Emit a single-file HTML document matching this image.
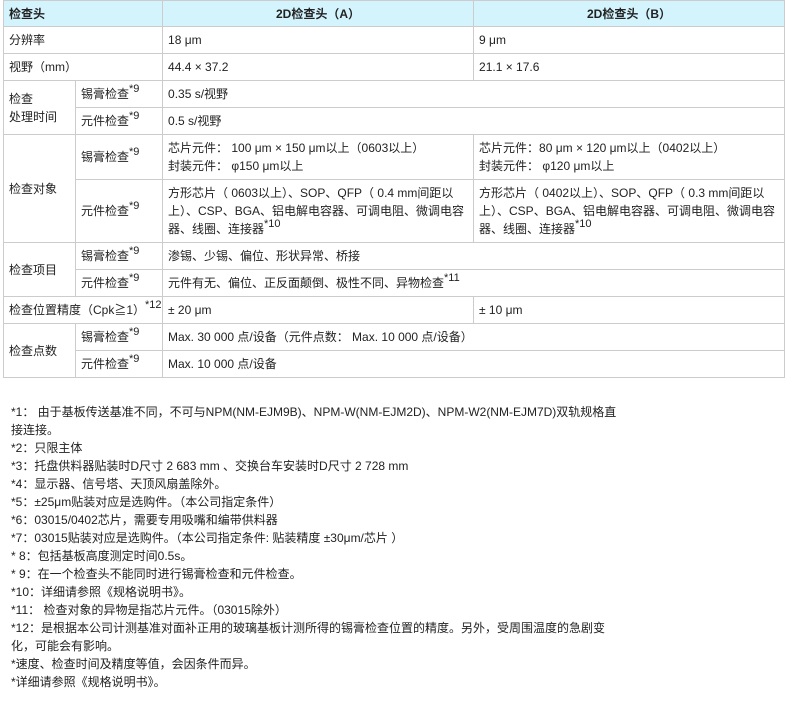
<!DOCTYPE html>
<html><head><meta charset="utf-8"><style>
body{margin:0;background:#fff;font-family:"Liberation Sans","Noto Sans CJK SC",sans-serif;font-size:12px;color:#222;width:789px;height:701px;overflow:hidden}
table{position:absolute;left:3px;top:0;border-collapse:collapse;table-layout:fixed;width:781px}
td,th{border:1px solid #ccc;padding:0 5px;vertical-align:middle;line-height:18px;font-weight:normal;text-align:left}
th{background:#d4f4fd;font-weight:bold}
th.c{text-align:center}
td.nw{white-space:nowrap;padding-right:0}
sup{font-size:11px;vertical-align:0;position:relative;top:-6px;line-height:0}
.notes{position:absolute;left:11px;top:403px;line-height:18px;width:606px}
</style></head><body>
<table>
<colgroup><col style="width:72px"><col style="width:87px"><col style="width:311px"><col style="width:311px"></colgroup>
<tr style="height:26px"><th colspan="2">检查头</th><th class="c">2D检查头（A）</th><th class="c">2D检查头（B）</th></tr>
<tr style="height:27px"><td colspan="2">分辨率</td><td>18 μm</td><td>9 μm</td></tr>
<tr style="height:27px"><td colspan="2">视野（mm）</td><td>44.4 × 37.2</td><td>21.1 × 17.6</td></tr>
<tr style="height:27px"><td rowspan="2">检查<br>处理时间</td><td>锡膏检查<sup>*9</sup></td><td colspan="2">0.35 s/视野</td></tr>
<tr style="height:27px"><td>元件检查<sup>*9</sup></td><td colspan="2">0.5 s/视野</td></tr>
<tr style="height:45px"><td rowspan="2">检查对象</td><td>锡膏检查<sup>*9</sup></td><td>芯片元件： 100 μm × 150 μm以上（0603以上）<br>封装元件： φ150 μm以上</td><td>芯片元件：80 μm × 120 μm以上（0402以上）<br>封装元件： φ120 μm以上</td></tr>
<tr style="height:63px"><td>元件检查<sup>*9</sup></td><td>方形芯片（ 0603以上）、SOP、QFP（ 0.4 mm间距以上）、CSP、BGA、铝电解电容器、可调电阻、微调电容器、线圈、连接器<sup>*10</sup></td><td>方形芯片（ 0402以上）、SOP、QFP（ 0.3 mm间距以上）、CSP、BGA、铝电解电容器、可调电阻、微调电容器、线圈、连接器<sup>*10</sup></td></tr>
<tr style="height:27px"><td rowspan="2">检查项目</td><td>锡膏检查<sup>*9</sup></td><td colspan="2">渗锡、少锡、偏位、形状异常、桥接</td></tr>
<tr style="height:27px"><td>元件检查<sup>*9</sup></td><td colspan="2">元件有无、偏位、正反面颠倒、极性不同、异物检查<sup>*11</sup></td></tr>
<tr style="height:27px"><td colspan="2" class="nw">检查位置精度（Cpk≧1）<sup>*12</sup></td><td>± 20 μm</td><td>± 10 μm</td></tr>
<tr style="height:27px"><td rowspan="2">检查点数</td><td>锡膏检查<sup>*9</sup></td><td colspan="2">Max. 30 000 点/设备（元件点数： Max. 10 000 点/设备）</td></tr>
<tr style="height:27px"><td>元件检查<sup>*9</sup></td><td colspan="2">Max. 10 000 点/设备</td></tr>
</table>
<div class="notes">
*1： 由于基板传送基准不同，不可与NPM(NM-EJM9B)、NPM-W(NM-EJM2D)、NPM-W2(NM-EJM7D)双轨规格直<br>接连接。<br>
*2：只限主体<br>
*3：托盘供料器贴装时D尺寸 2 683 mm 、交换台车安装时D尺寸 2 728 mm<br>
*4：显示器、信号塔、天顶风扇盖除外。<br>
*5：±25μm贴装对应是选购件。（本公司指定条件）<br>
*6：03015/0402芯片，需要专用吸嘴和编带供料器<br>
*7：03015贴装对应是选购件。（本公司指定条件: 贴装精度 ±30μm/芯片 ）<br>
* 8：包括基板高度测定时间0.5s。<br>
* 9：在一个检查头不能同时进行锡膏检查和元件检查。<br>
*10：详细请参照《规格说明书》。<br>
*11： 检查对象的异物是指芯片元件。（03015除外）<br>
*12：是根据本公司计测基准对面补正用的玻璃基板计测所得的锡膏检查位置的精度。另外，受周围温度的急剧变<br>化，可能会有影响。<br>
*速度、检查时间及精度等值，会因条件而异。<br>
*详细请参照《规格说明书》。
</div>
</body></html>
